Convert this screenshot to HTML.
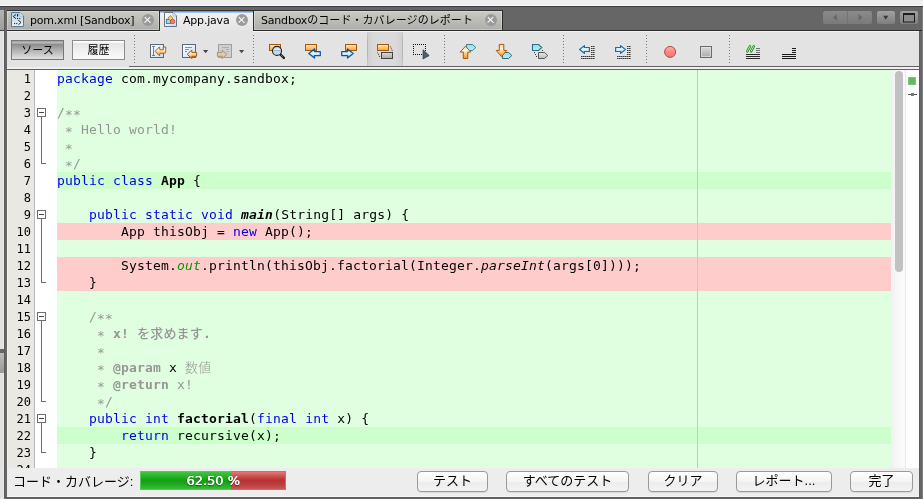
<!DOCTYPE html>
<html lang="ja">
<head>
<meta charset="utf-8">
<title>App.java</title>
<style>
html,body{margin:0;padding:0;}
body{width:923px;height:499px;overflow:hidden;position:relative;background:#eeeeee;will-change:transform;
 font-family:"DejaVu Sans","Liberation Sans","Noto Sans CJK JP",sans-serif;font-size:12px;color:#000;}
div,span{box-sizing:border-box;}
.abs{position:absolute;}
/* frame */
#topdark{left:0;top:6px;width:923px;height:25px;background:#666;border-top:1px solid #3c3c3c;border-bottom:1px solid #2c2c2c;}
#leftstrip{left:0;top:31px;width:4px;height:469px;background:#e2e2e2;border-right:1px solid #ebebeb;}
#leftstripT{left:0;top:10px;width:4px;height:21px;background:linear-gradient(#b4b4b4,#9c9c9c);border-bottom:1px solid #444;}
#leftmark{left:0;top:349px;width:4px;height:24px;background:linear-gradient(#bcbcbc,#999);border-top:4px solid #666;}
#leftline{left:4px;top:7px;width:3px;height:492px;background:#666;border-left:1px solid #5c5c5c;}
#rightline{left:919px;top:31px;width:4px;height:468px;background:#666;border-left:1px solid #5c5c5c;border-right:1px solid #808080;}
#bottomline{left:4px;top:497px;width:919px;height:2px;background:#666;border-top:1px solid #5c5c5c;}
/* tabs */
.tab{top:10px;height:21px;border-top:1px solid #333;border-bottom:1px solid #2c2c2c;border-right:1px solid #2c2c2c;
 background:linear-gradient(#cbcbc0 0%,#c2c2bc 30%,#adadad 100%);font-size:11px;line-height:21px;white-space:nowrap;}
.tab{box-shadow:inset 0 0 0 1px rgba(255,255,255,.28);}
.tab.active{z-index:2;box-shadow:none;background:linear-gradient(#5c9ee8 0,#5c9ee8 1px,#a5c8f2 1px,#a5c8f2 2px,#f1f1f1 2px,#e3e3e3 100%);border:none;border-top:1px solid #333;top:10px;height:22px;}
.tab .lbl{position:absolute;top:-1px;letter-spacing:-0.2px;}
.close{position:absolute;top:2.5px;width:12px;height:12px;border-radius:6px;background:#8f8f8f;}
.close:before,.close:after{content:"";position:absolute;left:5.4px;top:2.2px;width:1.2px;height:7.6px;background:#fff;transform:rotate(45deg);}
.close:after{transform:rotate(-45deg);}
.tab .close{background:#9a9a9a;}
.tab.active .close{background:#9b9b9b;}
/* toolbar */
#toolbar{left:7px;top:31px;width:912px;height:38px;background:#e3e3e3;border-top:1px solid #f4f4f4;}
.tbtn{top:40px;height:20px;border:1px solid #8c8c8c;font-size:11px;line-height:19px;text-align:center;
 font-family:"Liberation Sans","Noto Sans CJK JP",sans-serif;}
.sep{width:1px;top:35px;height:29px;background:repeating-linear-gradient(#777 0,#777 1px,transparent 1px,transparent 3px);}
/* editor */
#gutter{left:7px;top:70px;width:28px;height:398px;background:#e9e8e2;border-right:1px solid #b8b8b8;border-left:1px solid #f3f2ee;overflow:hidden;}
#fold{left:35px;top:70px;width:22px;height:398px;background:#fff;overflow:hidden;}
#code{left:57px;top:70px;width:834px;height:398px;background:#e0ffe0;overflow:hidden;}
.ln{position:absolute;right:3px;width:24px;text-align:right;font-family:"DejaVu Sans Mono",monospace;font-size:12px;line-height:17px;height:17px;margin-top:1px;}
.row{position:absolute;left:0;width:834px;height:17px;}
.row.g{background:#ccffcc;}
.row.r{background:#ffcccc;}
pre{margin:0;position:absolute;left:0;top:0;font-family:"DejaVu Sans Mono","Noto Sans CJK JP",monospace;font-size:13px;line-height:17px;letter-spacing:0.174px;color:#000;}
.k{color:#0000e6;}
.c{color:#969696;}
.b{font-weight:bold;}
.a{position:relative;top:2px;}
.i{font-style:italic;}
.f{color:#009900;font-style:italic;}
/* bottom */
#bottombar{left:7px;top:468px;width:912px;height:29px;background:#ededed;border-bottom:1px solid #f8f8f8;}
.bbtn{top:471px;height:21px;border:1px solid #9a9a9a;border-radius:4px;background:linear-gradient(#ffffff,#f4f4f4 50%,#ececec 51%,#f3f3f3);
 font-size:13px;line-height:18px;text-align:center;font-family:"Liberation Sans","Noto Sans CJK JP",sans-serif;box-shadow:0 1px 0 rgba(0,0,0,.08);}
</style>
</head>
<body>
<div class="abs" style="left:0;top:5px;width:923px;height:1px;background:#fbfbfb;"></div>
<div class="abs" id="topdark"></div>
<div class="abs" id="leftstrip"></div>
<div class="abs" id="leftstripT"></div>
<div class="abs" id="leftmark"></div>
<div class="abs" id="leftline"></div>
<div class="abs" id="rightline"></div>
<div class="abs" id="bottomline"></div>
<div class="abs" style="left:922px;top:7px;width:1px;height:492px;background:#808080;"></div>

<!-- TABS -->
<div class="abs tab" style="left:7px;width:153px;">
  <span class="lbl" style="left:23px;">pom.xml [Sandbox]</span>
  <span class="close" style="left:135px;"></span>
</div>
<div class="abs tab active" style="left:160px;width:93px;">
  <span class="lbl" style="left:23px;top:-1px;">App.java</span>
  <span class="close" style="left:76px;top:2.5px;"></span>
</div>
<div class="abs tab" style="left:253px;width:250px;border-left:1px solid #2c2c2c;">
  <span class="lbl" style="left:7px;font-family:'DejaVu Sans','Noto Sans CJK JP',sans-serif;">Sandbox<span style="letter-spacing:0.07px;">のコード・カバレージのレポート</span></span>
  <span class="close" style="left:231px;"></span>
</div>

<!-- TOOLBAR -->
<div class="abs" id="toolbar"></div>
<div class="abs tbtn" style="left:11px;width:53px;background:linear-gradient(#9e9e9e 0,#b8b8b8 1.5px,#b4b4b4 2px,#8e8e8e 3.5px,#b0b0b0 50%,#e2e2e2 100%);border-color:#777;">ソース</div>
<div class="abs tbtn" style="left:72px;width:53px;background:linear-gradient(#fff 0,#fff 1px,#e6e6e6 2.5px,#f0f0f0 50%,#fafafa 100%);">履歴</div>
<div class="abs sep" style="left:134px;"></div>
<div class="abs sep" style="left:253px;"></div>
<div class="abs sep" style="left:444px;"></div>
<div class="abs sep" style="left:563px;"></div>
<div class="abs sep" style="left:646px;"></div>
<div class="abs sep" style="left:729px;"></div>
<div class="abs" style="left:129px;top:66px;width:790px;height:1px;background:#626262;"></div>
<div class="abs" style="left:7px;top:67px;width:912px;height:2px;background:#f0f0f0;"></div>
<div class="abs" style="left:7px;top:69px;width:912px;height:1px;background:#626262;"></div>
<!--ICONS-START-->
<svg class="abs" style="left:0;top:0;z-index:3;" width="923" height="70" viewBox="0 0 923 70">
<defs>
<linearGradient id="gOr" x1="0" y1="0" x2="0" y2="1"><stop offset="0" stop-color="#ffe9c8"/><stop offset="1" stop-color="#f3a43a"/></linearGradient>
<linearGradient id="gOrR" x1="0" y1="0" x2="0" y2="1"><stop offset="0" stop-color="#ffd8a4"/><stop offset="0.35" stop-color="#fff0dc"/><stop offset="0.6" stop-color="#ffc880"/><stop offset="1" stop-color="#f09a2c"/></linearGradient>
<linearGradient id="gBl" x1="0" y1="0" x2="0" y2="1"><stop offset="0" stop-color="#a8d4f8"/><stop offset="0.45" stop-color="#eaf5ff"/><stop offset="1" stop-color="#88c4f2"/></linearGradient>
<linearGradient id="gDoc" x1="0" y1="0" x2="1" y2="1"><stop offset="0" stop-color="#ffffff"/><stop offset="1" stop-color="#cadcf2"/></linearGradient>
<linearGradient id="gCy" x1="0" y1="0" x2="0" y2="1"><stop offset="0" stop-color="#9adcee"/><stop offset="1" stop-color="#b8ecf8"/></linearGradient>
<linearGradient id="gGy" x1="0" y1="0" x2="0" y2="1"><stop offset="0" stop-color="#dcdcdc"/><stop offset="1" stop-color="#a8a8a8"/></linearGradient>
<linearGradient id="gRed" x1="0" y1="0" x2="0" y2="1"><stop offset="0" stop-color="#ffb0a8"/><stop offset="0.5" stop-color="#ff8880"/><stop offset="1" stop-color="#f87870"/></linearGradient>
<linearGradient id="gGy2" x1="0" y1="0" x2="0" y2="1"><stop offset="0" stop-color="#e6e6e6"/><stop offset="1" stop-color="#bcbcbc"/></linearGradient>
<linearGradient id="gTb" x1="0" y1="0" x2="0" y2="1"><stop offset="0" stop-color="#a2a2a2"/><stop offset="1" stop-color="#7e7e7e"/></linearGradient>
<linearGradient id="gTbD" x1="0" y1="0" x2="0" y2="1"><stop offset="0" stop-color="#8a8a8a"/><stop offset="1" stop-color="#7a7a7a"/></linearGradient>
<linearGradient id="gXml" x1="0" y1="0" x2="0" y2="1"><stop offset="0" stop-color="#b4cfe4"/><stop offset="1" stop-color="#eaf2fa"/></linearGradient>
</defs>
<!-- tab icons -->
<g>
 <path d="M11.5 12.5 H20 L23.5 16 V26.5 H11.5 Z" fill="url(#gXml)" stroke="#5c7a92"/>
 <path d="M20 12.5 V16 H23.5 Z" fill="#fafcfe" stroke="#8aa4b8" stroke-width="0.6"/>
 <path d="M16 14.5 L13.3 16.6 L16 18.7" fill="none" stroke="#222" stroke-width="0.95"/>
 <path d="M17.6 14 V16.6" stroke="#222" stroke-width="1.1"/>
 <rect x="17" y="18" width="1.1" height="1.1" fill="#222"/><rect x="19.2" y="18" width="1.1" height="1.1" fill="#222"/>
 <rect x="14" y="23" width="1.1" height="1.1" fill="#222"/><rect x="16.2" y="23" width="1.1" height="1.1" fill="#222"/>
 <path d="M18.2 20.2 L21 22.4 L18.4 24.8" fill="none" stroke="#222" stroke-width="0.95"/>
</g>
<g>
 <path d="M164.5 12.5 H173 L176.5 16 V26.5 H164.5 Z" fill="url(#gDoc)" stroke="#66747f"/>
 <path d="M173 12.5 V16 H176.5 Z" fill="#fafcfe" stroke="#8a98a8" stroke-width="0.6"/>
 <rect x="166.3" y="19.3" width="4.4" height="4.2" fill="#a8d0f0" stroke="#3a6a90" stroke-width="0.8"/>
 <path d="M170.4 15.6 L172.9 18.1 L170.4 20.6 L167.9 18.1 Z" fill="#ffd060" stroke="#b87808" stroke-width="0.9"/>
 <circle cx="172.6" cy="21.5" r="2.2" fill="#f08080" stroke="#b84848" stroke-width="0.8"/>
</g>
<!-- tab control buttons -->
<rect x="823" y="11" width="49" height="13" rx="2" fill="url(#gTbD)"/>
<rect x="847" y="11" width="1" height="13" fill="#747474"/>
<path d="M833 17.5 L837 14 V21 Z" fill="#686868"/>
<path d="M862.5 17.5 L858.5 14 V21 Z" fill="#686868"/>
<rect x="877" y="11" width="18" height="13" rx="2" fill="url(#gTb)"/>
<path d="M883.2 15.7 H888.2 L885.7 19.8 Z" fill="#383838"/>
<rect x="900" y="11" width="18" height="13" rx="2" fill="url(#gTb)"/>
<rect x="903.5" y="14" width="11" height="8" fill="#8c8c8c" stroke="#1c1c1c"/>
<rect x="903" y="13" width="12" height="2" fill="#1c1c1c"/>

<!-- pressed toggle bg -->
<linearGradient id="gPr" x1="0" y1="0" x2="1" y2="0"><stop offset="0" stop-color="#cfcfcf"/><stop offset="0.2" stop-color="#dadada"/><stop offset="0.8" stop-color="#dadada"/><stop offset="1" stop-color="#cfcfcf"/></linearGradient>
<linearGradient id="gPrL" x1="0" y1="0" x2="0" y2="1"><stop offset="0" stop-color="#b8b8b8" stop-opacity="0.15"/><stop offset="0.3" stop-color="#b4b4b4"/><stop offset="0.7" stop-color="#b4b4b4"/><stop offset="1" stop-color="#b8b8b8" stop-opacity="0.15"/></linearGradient>
<rect x="367" y="32" width="36" height="34" fill="url(#gPr)"/>
<rect x="367" y="32" width="1" height="34" fill="url(#gPrL)"/><rect x="402" y="32" width="1" height="34" fill="url(#gPrL)"/>
<!-- 1: last edit -->
<rect x="150.5" y="44.5" width="13" height="13" fill="url(#gDoc)" stroke="#5a6878"/>
<path d="M152 46.5 H155 M153.5 46.5 V55.5 M152 55.5 H155" stroke="#566474" stroke-width="0.8" fill="none"/>
<path d="M155.1 51.3 L159.5 46.9 L159.9 49.8 L163.2 49.8 L163.2 47 L165.7 47 L165.7 51.8 Q165.7 53.3 164.2 53.3 L159.9 53.3 L159.5 55.8 Z" fill="url(#gOrR)" stroke="#a85606" stroke-width="0.9" stroke-linejoin="round"/>
<!-- 2: back -->
<rect x="182.5" y="44.5" width="13" height="13" fill="url(#gDoc)" stroke="#5a6878"/>
<path d="M185 47.5 H192 M185 49.5 H189 M185 51.5 H187" stroke="#8a8f96" stroke-width="1"/>
<path d="M187.2 54.3 L191.8 50.1 L191.8 52.4 L196.6 52.4 L196.6 56.3 L191.8 56.3 L191.8 58.6 Z" fill="url(#gOrR)" stroke="#a85606" stroke-width="1" stroke-linejoin="round"/>
<path d="M203 50 H208.2 L205.6 53.2 Z" fill="#3a4858"/>
<!-- 3: fwd disabled -->
<rect x="218.5" y="44.5" width="13" height="13" fill="#cdcfd1" stroke="#9ca0a4"/>
<path d="M222 47.5 H229 M226 49.5 H229 M227 51.5 H229" stroke="#acaeb0" stroke-width="1"/>
<path d="M226.8 54.3 L222.2 50.1 L222.2 52.4 L217.4 52.4 L217.4 56.3 L222.2 56.3 L222.2 58.6 Z" fill="#dacab2" stroke="#ac9474" stroke-width="1" stroke-linejoin="round"/>
<path d="M239 50 H244.2 L241.6 53.2 Z" fill="#3a4858"/>
<!-- 4: find selection -->
<rect x="269.5" y="44.5" width="11" height="6" fill="url(#gOr)" stroke="#a45808"/>
<path d="M280.3 54.3 L283.9 57.9" stroke="#1a1a1a" stroke-width="2.4" stroke-linecap="round"/>
<path d="M281.3 55.3 L283.8 57.8" stroke="#eee" stroke-width="0.8" stroke-dasharray="0.9 0.9"/>
<circle cx="277" cy="50.9" r="4.5" fill="#bcdcf4" stroke="#1e1e1e" stroke-width="1.1"/>
<path d="M273.6 50 Q277 46.8 280.4 50" fill="#e8f4ff" opacity="0.9"/>
<path d="M274 50.5 H280" stroke="#a0a8b0" stroke-width="0.8"/>
<!-- 5: find prev -->
<rect x="305.5" y="44.5" width="11" height="6" fill="url(#gOr)" stroke="#a45808"/>
<path d="M308.8 53.5 L314.5 48.9 L314.5 51.5 L320.3 51.5 L320.3 55.5 L314.5 55.5 L314.5 58.1 Z" fill="url(#gBl)" stroke="#0e55a0" stroke-width="1.25" stroke-linejoin="round"/>
<!-- 6: find next -->
<rect x="345.5" y="44.5" width="11" height="6" fill="url(#gOr)" stroke="#a45808"/>
<path d="M353.2 53.5 L347.5 48.9 L347.5 51.5 L341.7 51.5 L341.7 55.5 L347.5 55.5 L347.5 58.1 Z" fill="url(#gBl)" stroke="#0e55a0" stroke-width="1.25" stroke-linejoin="round"/>
<!-- 7: toggle highlight -->
<rect x="377.5" y="44.5" width="11" height="6" fill="url(#gOr)" stroke="#a45808"/>
<rect x="381.5" y="52.5" width="11" height="6" fill="url(#gGy)" stroke="#444"/>
<path d="M390.5 46.5 L392.5 51.5" stroke="#333" stroke-width="1" stroke-dasharray="1 1"/>
<path d="M377.5 52.5 L380 57.5" stroke="#333" stroke-width="1" stroke-dasharray="1 1"/>
<!-- 8: rect selection -->
<path d="M413 44.5 H426" stroke="#111" stroke-width="1" stroke-dasharray="1 1"/>
<path d="M413 54.5 H422" stroke="#111" stroke-width="1" stroke-dasharray="1 1"/>
<path d="M413.5 44 V55" stroke="#111" stroke-width="1" stroke-dasharray="1 1"/>
<path d="M425.5 44 V51" stroke="#111" stroke-width="1" stroke-dasharray="1 1"/>
<path d="M423 49.8 V59 L429.2 55.6 Z" fill="#4a6070" stroke="#2c3c48" stroke-width="0.7" stroke-linejoin="round"/>
<!-- 9: prev bookmark -->
<path d="M466.4 44.5 H472.6 L475.8 47.5 L472.6 50.5 H466.4 Z" fill="url(#gCy)" stroke="#3c8292" stroke-width="1"/>
<path d="M465.5 46.2 L470.8 52.1 L467.8 52.1 L467.8 58.5 L463.3 58.5 L463.3 52.1 L460.2 52.1 Z" fill="url(#gOrR)" stroke="#a85606" stroke-width="1" stroke-linejoin="round"/>
<!-- 10: next bookmark -->
<path d="M502.5 52.5 H508.6 L511.8 55.5 L508.6 58.5 H502.5 Z" fill="url(#gCy)" stroke="#2c6c7c" stroke-width="1"/>
<path d="M499.3 44.4 H503.8 V50.4 H506.8 L501.5 56.6 L496.2 50.4 H499.3 Z" fill="url(#gOrR)" stroke="#a85606" stroke-width="1" stroke-linejoin="round"/>
<!-- 11: toggle bookmark -->
<path d="M532.5 44.5 H538.6 L541.8 47.5 L538.6 50.5 H532.5 Z" fill="url(#gCy)" stroke="#2c7080" stroke-width="1.1"/>
<path d="M538.5 52.5 H544.6 L547.8 55.5 L544.6 58.5 H538.5 Z" fill="url(#gGy2)" stroke="#5a5a5a" stroke-width="1"/>
<rect x="542" y="50" width="1" height="1" fill="#333"/>
<rect x="534" y="52" width="1" height="1" fill="#333"/><rect x="535" y="54" width="1" height="1" fill="#333"/><rect x="536" y="56" width="1" height="1" fill="#333"/>
<!-- 12: shift left -->
<path d="M591 46.5 H595 M591 48.5 H595 M591 50.5 H595 M591 52.5 H595 M591 54.5 H595 M581 56.5 H595 M581 58.5 H595" stroke="#3a3a3a" stroke-width="1" stroke-dasharray="1.6 0.4"/>
<path d="M579.6 49.5 L584.4 45.6 L584.4 47.5 L589.4 47.5 L589.4 51.5 L584.4 51.5 L584.4 53.4 Z" fill="url(#gBl)" stroke="#1c6ca6" stroke-width="1.2" stroke-linejoin="round"/>
<!-- 13: shift right -->
<path d="M627 46.5 H631 M627 48.5 H631 M627 50.5 H631 M627 52.5 H631 M627 54.5 H631 M617 56.5 H631 M617 58.5 H631" stroke="#3a3a3a" stroke-width="1" stroke-dasharray="1.6 0.4"/>
<path d="M625.4 49.5 L620.6 45.6 L620.6 47.5 L615.6 47.5 L615.6 51.5 L620.6 51.5 L620.6 53.4 Z" fill="url(#gBl)" stroke="#1c6ca6" stroke-width="1.2" stroke-linejoin="round"/>
<!-- 14: record -->
<circle cx="670.1" cy="51.9" r="5.5" fill="url(#gRed)" stroke="#b44848" stroke-width="1"/>
<!-- 15: stop -->
<rect x="700.5" y="46.5" width="11" height="11" fill="url(#gGy)" stroke="#6a6a6a"/>
<rect x="701.5" y="47.5" width="9" height="9" fill="none" stroke="#e8e8e8" stroke-width="0.8" opacity="0.8"/>
<!-- 16: comment -->
<path d="M756 48.5 H760 M756 50.5 H760 M756 52.5 H760" stroke="#707070" stroke-width="1"/>
<path d="M746 54.5 H760 M746 56.5 H760 M746 58.5 H760" stroke="#2a2a2a" stroke-width="1"/>
<path d="M747.3 51.4 L750 46.2 M751.1 51.4 L753.8 46.2" stroke="#0c8c0c" stroke-width="2.4" stroke-linecap="round"/>
<path d="M747.3 51.4 L750 46.2 M751.1 51.4 L753.8 46.2" stroke="#c8fac8" stroke-width="0.9" stroke-linecap="round"/>
<!-- 17: uncomment -->
<path d="M792 48.5 H796 M792 50.5 H796 M792 52.5 H796 M782 54.5 H796 M782 56.5 H796 M782 58.5 H796" stroke="#1a1a1a" stroke-width="1"/>
</svg>
<!--ICONS-END-->

<!-- EDITOR -->
<div class="abs" id="gutter">
<div class="ln" style="top:0px;">1</div>
<div class="ln" style="top:17px;">2</div>
<div class="ln" style="top:34px;">3</div>
<div class="ln" style="top:51px;">4</div>
<div class="ln" style="top:68px;">5</div>
<div class="ln" style="top:85px;">6</div>
<div class="ln" style="top:102px;">7</div>
<div class="ln" style="top:119px;">8</div>
<div class="ln" style="top:136px;">9</div>
<div class="ln" style="top:153px;">10</div>
<div class="ln" style="top:170px;">11</div>
<div class="ln" style="top:187px;">12</div>
<div class="ln" style="top:204px;">13</div>
<div class="ln" style="top:221px;">14</div>
<div class="ln" style="top:238px;">15</div>
<div class="ln" style="top:255px;">16</div>
<div class="ln" style="top:272px;">17</div>
<div class="ln" style="top:289px;">18</div>
<div class="ln" style="top:306px;">19</div>
<div class="ln" style="top:323px;">20</div>
<div class="ln" style="top:340px;">21</div>
<div class="ln" style="top:357px;">22</div>
<div class="ln" style="top:374px;">23</div>
<div class="ln" style="top:391px;">24</div>

</div>
<div class="abs" id="fold">
<div class="abs" style="left:2px;top:38px;width:9px;height:9px;border:1px solid #6e6e6e;background:#fff;"></div><div class="abs" style="left:4px;top:42px;width:5px;height:1px;background:#444;"></div><div class="abs" style="left:6px;top:47px;width:1px;height:46px;background:#6e6e6e;"></div><div class="abs" style="left:6px;top:93px;width:5px;height:1px;background:#6e6e6e;"></div>
<div class="abs" style="left:2px;top:140px;width:9px;height:9px;border:1px solid #6e6e6e;background:#fff;"></div><div class="abs" style="left:4px;top:144px;width:5px;height:1px;background:#444;"></div><div class="abs" style="left:6px;top:149px;width:1px;height:63px;background:#6e6e6e;"></div><div class="abs" style="left:6px;top:212px;width:5px;height:1px;background:#6e6e6e;"></div>
<div class="abs" style="left:2px;top:242px;width:9px;height:9px;border:1px solid #6e6e6e;background:#fff;"></div><div class="abs" style="left:4px;top:246px;width:5px;height:1px;background:#444;"></div><div class="abs" style="left:6px;top:251px;width:1px;height:80px;background:#6e6e6e;"></div><div class="abs" style="left:6px;top:331px;width:5px;height:1px;background:#6e6e6e;"></div>
<div class="abs" style="left:2px;top:344px;width:9px;height:9px;border:1px solid #6e6e6e;background:#fff;"></div><div class="abs" style="left:4px;top:348px;width:5px;height:1px;background:#444;"></div><div class="abs" style="left:6px;top:353px;width:1px;height:29px;background:#6e6e6e;"></div><div class="abs" style="left:6px;top:382px;width:5px;height:1px;background:#6e6e6e;"></div>
</div>
<div class="abs" id="code">
<div class="row g" style="top:102px;"></div>
<div class="row r" style="top:153px;"></div>
<div class="row r" style="top:187px;"></div>
<div class="row r" style="top:204px;"></div>
<div class="row g" style="top:357px;"></div>

<pre><span class="k">package</span> com.mycompany.sandbox;

<span class="c">/<span class="a">*</span><span class="a">*</span></span>
<span class="c"> <span class="a">*</span> Hello world!</span>
<span class="c"> <span class="a">*</span></span>
<span class="c"> <span class="a">*</span>/</span>
<span class="k">public</span> <span class="k">class</span> <span class="b">App</span> {

    <span class="k">public</span> <span class="k">static</span> <span class="k">void</span> <span class="b i">main</span>(String[] args) {
        App thisObj = <span class="k">new</span> App();

        System.<span class="f">out</span>.println(thisObj.factorial(Integer.<span class="i">parseInt</span>(args[0])));
    }

    <span class="c">/<span class="a">*</span><span class="a">*</span></span>
    <span class="c"> <span class="a">*</span> <span class="b">x! <span style="font-weight:500;">を求めます</span>.</span></span>
    <span class="c"> <span class="a">*</span></span>
    <span class="c"> <span class="a">*</span> <span class="b">@param</span></span> x <span class="c" style="font-weight:300;">数値</span>
    <span class="c"> <span class="a">*</span> <span class="b">@return</span> x!</span>
    <span class="c"> <span class="a">*</span>/</span>
    <span class="k">public</span> <span class="k">int</span> <span class="b">factorial</span>(<span class="k">final</span> <span class="k">int</span> x) {
        <span class="k">return</span> recursive(x);
    }
</pre>
<div class="abs" style="left:640px;top:0;width:1px;height:398px;background:#ffb0b0;"></div>
</div>
<!-- scrollbar -->
<div class="abs" style="left:891px;top:70px;width:15px;height:398px;background:linear-gradient(90deg,#f0f0f0,#f7f7f7 40%,#fbfbfb);border-right:1px solid #e9e9e9;"></div>
<div class="abs" style="left:895px;top:71px;width:8px;height:201px;border-radius:4px;background:#c1c1c1;"></div>
<div class="abs" style="left:906px;top:70px;width:13px;height:398px;background:#fff;"></div>
<div class="abs" style="left:908px;top:77px;width:8px;height:8px;background:#62b862;border:1px solid #7cc87c;"></div>
<div class="abs" style="left:908px;top:94px;width:9px;height:1px;background:#555;"></div>
<div class="abs" style="left:911px;top:93px;width:3px;height:3px;background:#777;"></div>

<!-- BOTTOM -->
<div class="abs" id="bottombar"></div>
<div class="abs" style="left:13px;top:472.6px;font-size:13px;line-height:18px;font-family:'Liberation Sans','Noto Sans CJK JP',sans-serif;white-space:nowrap;">コード・カバレージ:</div>
<div class="abs" style="left:140px;top:471px;width:92px;height:19px;border:1px solid #4fcf4f;border-right:none;background:linear-gradient(#3cc83c 0%,#28b428 25%,#179d17 48%,#1fa91f 70%,#34bf34 100%);"></div>
<div class="abs" style="left:231px;top:471px;width:55px;height:19px;border:1px solid #d86868;border-left:none;background:linear-gradient(#e27878 0%,#cc5050 25%,#b43232 48%,#bc3c3c 70%,#cc5454 100%);"></div>
<div class="abs" style="left:140px;top:471px;width:146px;height:19px;line-height:19px;text-align:center;color:#fff;font-size:13px;font-family:'DejaVu Sans',sans-serif;text-shadow:0.5px 0 0 #fff,0 1px 1.5px rgba(0,0,0,.6);">62.50 %</div>
<div class="abs bbtn" style="left:417px;width:71px;">テスト</div>
<div class="abs bbtn" style="left:506px;width:123px;">すべてのテスト</div>
<div class="abs bbtn" style="left:648px;width:70px;">クリア</div>
<div class="abs bbtn" style="left:736px;width:96px;">レポート...</div>
<div class="abs bbtn" style="left:850px;width:63px;">完了</div>
</body>
</html>
